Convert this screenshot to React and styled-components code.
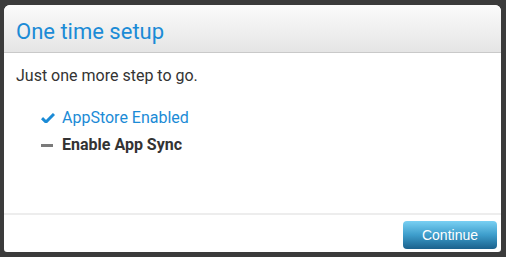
import React from 'react';
import styled, { createGlobalStyle } from 'styled-components';

const GlobalStyle = createGlobalStyle`
  *, *::before, *::after {
    box-sizing: border-box;
  }
  html, body {
    margin: 0;
    padding: 0;
    background: #3b3b3b;
    font-family: Roboto, 'Liberation Sans', sans-serif;
  }
`;

const Screen = styled.div`
  width: 506px;
  height: 257px;
  padding: 5px 5px 5px 4px;
  background: #3b3b3b;
`;

const Dialog = styled.div`
  display: flex;
  flex-direction: column;
  height: 100%;
  background: #ffffff;
  border-radius: 6px 6px 3px 3px;
  overflow: hidden;
`;

const Header = styled.div`
  height: 48px;
  padding: 14px 12px 0;
  background: linear-gradient(#fbfbfb, #e5e5e5);
  border-bottom: 1px solid #c9c9c9;
`;

const Title = styled.h1`
  margin: 0;
  font-size: 22px;
  line-height: 26px;
  font-weight: 400;
  color: #1b8bd6;
`;

const Body = styled.div`
  flex: 1;
  padding: 13px 12px 0;
`;

const Intro = styled.p`
  margin: 0;
  font-size: 16px;
  line-height: 19px;
  color: #333333;
`;

const Steps = styled.ul`
  list-style: none;
  margin: 23px 0 0;
  padding: 0 0 0 25px;
  display: flex;
  flex-direction: column;
  gap: 8px;
`;

const Step = styled.li`
  display: flex;
  align-items: center;
  gap: 7px;
  font-size: 16px;
  line-height: 19px;
  font-weight: ${(p) => (p.$done ? 400 : 700)};
  color: ${(p) => (p.$done ? '#1b8bd6' : '#333333')};
`;

const Mark = styled.span`
  width: 14px;
  height: 19px;
  display: flex;
  align-items: center;
  justify-content: flex-start;
  padding-top: ${(p) => p.$offset || 0}px;
`;

const Dash = styled.span`
  display: block;
  width: 12px;
  height: 3px;
  background: #7a7a7a;
`;

const Footer = styled.div`
  height: 39px;
  border-top: 2px solid #ededed;
  display: flex;
  align-items: flex-start;
  justify-content: flex-end;
  padding: 6px 4px 0;
`;

const Button = styled.button`
  width: 94px;
  height: 28px;
  border: none;
  border-radius: 4px;
  background: linear-gradient(#79d0f3, #3d9dcb 50%, #1b618c);
  color: #ffffff;
  font-family: 'Liberation Sans', Arial, sans-serif;
  font-size: 14px;
  cursor: pointer;
`;

function Check() {
  return (
    <svg width="14" height="10" viewBox="0 0 14 10">
      <path d="M1 5.2 L5 9 L13 1" fill="none" stroke="#1b8bd6" strokeWidth="3" />
    </svg>
  );
}

export default function App() {
  return (
    <>
      <GlobalStyle />
      <Screen>
        <Dialog>
          <Header>
            <Title>One time setup</Title>
          </Header>
          <Body>
            <Intro>Just one more step to go.</Intro>
            <Steps>
              <Step $done>
                <Mark $offset={1}>
                  <Check />
                </Mark>
                AppStore Enabled
              </Step>
              <Step>
                <Mark $offset={1}>
                  <Dash />
                </Mark>
                Enable App Sync
              </Step>
            </Steps>
          </Body>
          <Footer>
            <Button>Continue</Button>
          </Footer>
        </Dialog>
      </Screen>
    </>
  );
}
